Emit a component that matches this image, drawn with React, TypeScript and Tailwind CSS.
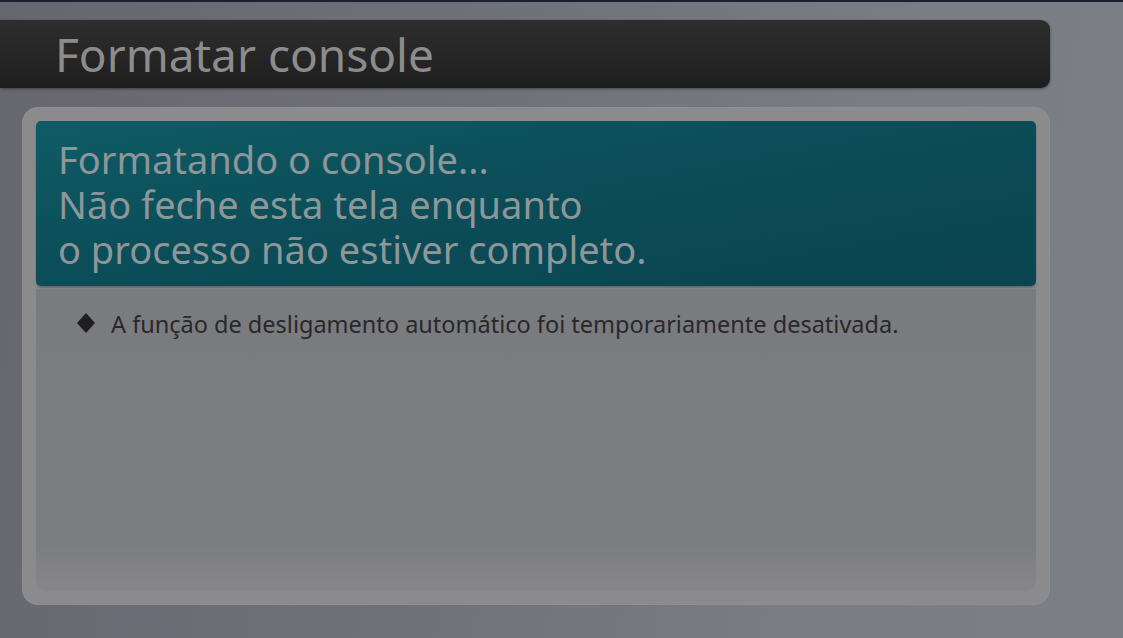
export default function App() {
  return (
    <div
      className="relative w-[1123px] h-[638px] overflow-hidden flex flex-col"
      style={{ fontFamily: '"Noto Sans", "Open Sans", sans-serif' }}
    >
      <div className="absolute inset-0 bg-[linear-gradient(100deg,#66666f_0%,#6f7179_40%,#7a7d83_75%,#7b7f85_100%)]" />
      <div className="relative h-[2px] bg-[#1b2030]" />
      <div className="relative flex flex-col pr-[73px] pt-[18px]">
        <div className="h-[68px] rounded-r-[9px] bg-[linear-gradient(180deg,#2e2e2e,#1e1e1e)] shadow-[0_1px_3px_rgba(0,0,0,0.4)] flex items-center pl-[55px]">
          <span className="text-[46px] leading-none text-[#8c8c8c]">Formatar console</span>
        </div>
        <div className="mt-[19px] ml-[22px] h-[498px] rounded-[16px] bg-[#8b8b8d] p-[14px] flex flex-col shadow-[inset_0_0_2px_rgba(255,255,255,0.15)]">
          <div className="rounded-[5px] h-[165px] bg-[linear-gradient(170deg,#0f5c66_0%,#0b4d58_45%,#0a4450_100%)] shadow-[0_2px_2px_rgba(0,0,0,0.25)] pl-[22px] pt-[16px]">
            <div className="text-[38px] leading-[45px] text-[#8d9799]">
              <div>Formatando o console...</div>
              <div>Não feche esta tela enquanto</div>
              <div>o processo não estiver completo.</div>
            </div>
          </div>
          <div className="flex-1 mt-[3px] rounded-b-[12px] bg-[linear-gradient(180deg,#7a7b7f,#7c7d81_85%,#87878a)] pt-[19px] pl-[41px]">
            <div className="flex items-center gap-[16px] text-[23.5px] leading-[32px] text-[#28282a]">
              <svg width="18" height="20" viewBox="0 0 18 20" className="mt-[-3px]">
                <path d="M9 0 L18 10 L9 20 L0 10 Z" fill="#1e1e20" />
              </svg>
              <span>A função de desligamento automático foi temporariamente desativada.</span>
            </div>
          </div>
        </div>
      </div>
    </div>
  );
}
